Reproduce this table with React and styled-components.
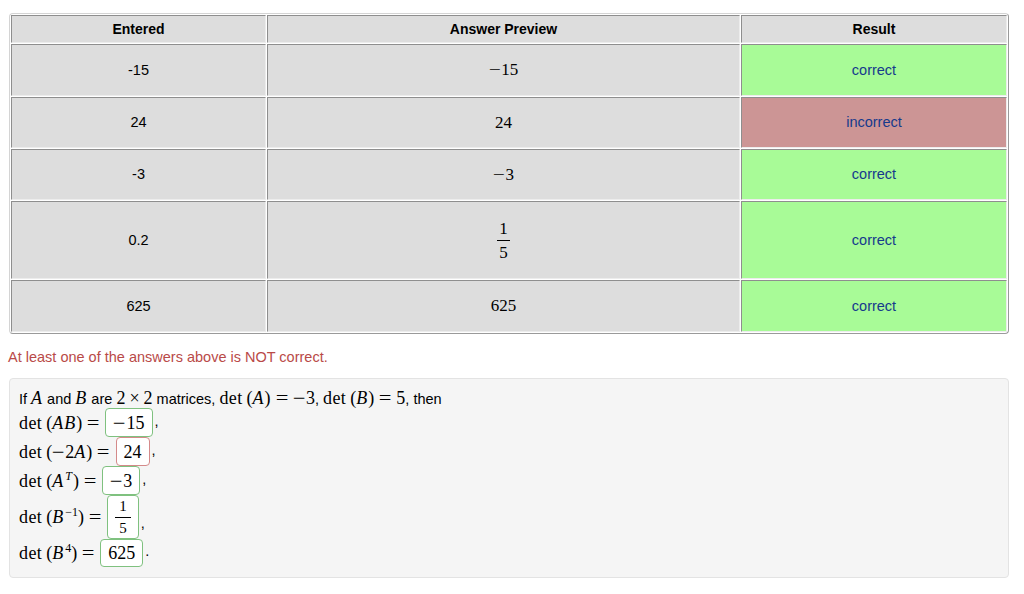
import styled, { createGlobalStyle } from "styled-components";

const GlobalStyle = createGlobalStyle`
  * { box-sizing: border-box; }
  body {
    margin: 0;
    background: #fff;
    font-family: "Liberation Sans", Arial, sans-serif;
    font-size: 14.5px;
    color: #000;
  }
`;

const rows = [
  { entered: "-15", preview: "15", neg: true, ok: true, h: 52 },
  { entered: "24", preview: "24", ok: false, h: 51 },
  { entered: "-3", preview: "3", neg: true, ok: true, h: 51 },
  { entered: "0.2", preview: { num: "1", den: "5" }, ok: true, h: 78 },
  { entered: "625", preview: "625", ok: true, h: 52 },
];

const Frac = ({ num, den, small }) => (
  <FracWrap $small={small}>
    <Num $small={small}>{num}</Num>
    <Den>{den}</Den>
  </FracWrap>
);

const App = () => {
  return (
    <Page>
      <GlobalStyle />
      <ResultsTable>
        <thead>
          <tr>
            <HeadCell $w={255}>Entered</HeadCell>
            <HeadCell $w={473}>Answer Preview</HeadCell>
            <HeadCell>Result</HeadCell>
          </tr>
        </thead>
        <tbody>
          {rows.map((r, i) => (
            <tr key={i}>
              <Cell $h={r.h}>{r.entered}</Cell>
              <Cell $h={r.h}>
                <MathText $size={17}>
                  {r.neg && <Minus>−</Minus>}
                  {typeof r.preview === "string" ? r.preview : <Frac {...r.preview} />}
                </MathText>
              </Cell>
              <Cell $h={r.h} $status={r.ok ? "ok" : "bad"}>
                <ResultText>{r.ok ? "correct" : "incorrect"}</ResultText>
              </Cell>
            </tr>
          ))}
        </tbody>
      </ResultsTable>

      <Message>At least one of the answers above is NOT correct.</Message>

      <Problem>
        <IntroLine>
          If <Var>A</Var> and <Var>B</Var> are{" "}
          <MathText>2<Bin>×</Bin>2</MathText> matrices,{" "}
          <MathText><Fn>det</Fn>(<Var>A</Var>)<Rel>=</Rel><Minus>−</Minus>3</MathText>,{" "}
          <MathText><Fn>det</Fn>(<Var>B</Var>)<Rel>=</Rel>5</MathText>, then
        </IntroLine>
        <Line>
          <MathText><Fn>det</Fn>(<Var>A</Var><Var>B</Var>)<Rel>=</Rel></MathText>
          <AnswerBox $ok><MathText><Minus>−</Minus>15</MathText></AnswerBox>
          <Punct>,</Punct>
        </Line>
        <Line>
          <MathText><Fn>det</Fn>(<Minus>−</Minus>2<Var>A</Var>)<Rel>=</Rel></MathText>
          <AnswerBox><MathText>24</MathText></AnswerBox>
          <Punct>,</Punct>
        </Line>
        <Line>
          <MathText><Fn>det</Fn>(<Var>A</Var><Sup><Var>T</Var></Sup>)<Rel>=</Rel></MathText>
          <AnswerBox $ok><MathText><Minus>−</Minus>3</MathText></AnswerBox>
          <Punct>,</Punct>
        </Line>
        <Line>
          <MathText><Fn>det</Fn>(<Var>B</Var><Sup>−1</Sup>)<Rel>=</Rel></MathText>
          <AnswerBox $ok $h={44}><MathText><Frac num="1" den="5" small /></MathText></AnswerBox>
          <Punct>,</Punct>
        </Line>
        <Line>
          <MathText><Fn>det</Fn>(<Var>B</Var><Sup>4</Sup>)<Rel>=</Rel></MathText>
          <AnswerBox $ok $h={28}><MathText>625</MathText></AnswerBox>
          <Punct>.</Punct>
        </Line>
      </Problem>
    </Page>
  );
};

export default App;

const Page = styled.div`
  padding: 13px 15px 16px 9px;
`;

const ResultsTable = styled.table`
  width: 1000px;
  table-layout: fixed;
  border-collapse: separate;
  border-spacing: 1px;
  border: 1px solid;
  border-color: #d4d4d4 #9a9a9a #9a9a9a #d4d4d4;
  border-radius: 4px;
`;

const HeadCell = styled.th`
  width: ${(p) => (p.$w ? `${p.$w}px` : "auto")};
  height: 28px;
  background: #dddddd;
  border: 1px solid;
  border-color: #8e8e8e #ececec #ececec #8e8e8e;
  padding: 0 4px;
  line-height: 17px;
  font-size: 14px;
  font-weight: bold;
  text-align: center;
`;

const Cell = styled.td`
  height: ${(p) => p.$h}px;
  background: ${(p) =>
    p.$status === "ok" ? "#a8fb97" : p.$status === "bad" ? "#cc9595" : "#dddddd"};
  border: 1px solid;
  border-color: #8e8e8e #ececec #ececec #8e8e8e;
  padding: 0 4px;
  line-height: 17px;
  font-size: 14.5px;
  text-align: center;
  vertical-align: middle;
`;

const ResultText = styled.span`
  color: #163a8c;
`;

const MathText = styled.span`
  font-family: "Liberation Serif", "Times New Roman", serif;
  font-size: ${(p) => p.$size || 18}px;
  line-height: 1;
  white-space: nowrap;
`;

const Var = styled.i`
  font-family: "Liberation Serif", "Times New Roman", serif;
  font-size: 18px;
  font-style: italic;
  padding-right: 1px;
`;

const Fn = styled.span`
  letter-spacing: 0.4px;
  margin-right: 4px;
`;

const Rel = styled.span`
  display: inline-block;
  margin: 0 6px;
  transform: scaleX(1.25);
`;

const Bin = styled.span`
  margin: 0 4px;
`;

const Minus = styled.span`
  display: inline-block;
  margin: 0 2px 0 1px;
  transform: scaleX(1.25);
`;

const Sup = styled.sup`
  font-size: 12px;
  line-height: 0;
  vertical-align: 7px;
  margin-left: 1px;

  & i {
    font-size: 12px;
  }
`;

const FracWrap = styled.span`
  display: inline-flex;
  flex-direction: column;
  align-items: center;
  vertical-align: middle;
  font-size: ${(p) => (p.$small ? "15px" : "17px")};
  line-height: ${(p) => (p.$small ? "17px" : "19px")};
`;

const Num = styled.span`
  padding: ${(p) => (p.$small ? "0 4px 2px" : "0 2px 2px")};
  border-bottom: 1px solid #000;
`;

const Den = styled.span`
  padding-top: 2px;
`;

const Message = styled.div`
  margin: 15px 0 0 -1px;
  color: #b94a48;
  font-size: 14.5px;
  line-height: 17px;
`;

const Problem = styled.div`
  width: 1000px;
  margin-top: 12px;
  padding: 10px 9px 10px 9px;
  background: #f5f5f5;
  border: 1px solid #e3e3e3;
  border-radius: 4px;
`;

const IntroLine = styled.div`
  height: 19px;
  line-height: 19px;
  font-size: 14.5px;
`;

const Line = styled.div`
  display: flex;
  align-items: center;
  line-height: 19px;
`;

const AnswerBox = styled.span`
  display: inline-flex;
  align-items: center;
  justify-content: center;
  height: ${(p) => p.$h || 29}px;
  margin-left: 1px;
  padding: 0 7px;
  background: #fff;
  border: 1px solid ${(p) => (p.$ok ? "#7fc17f" : "#d48a8a")};
  border-radius: 4px;
`;

const Punct = styled.span`
  margin-left: 2px;
  align-self: flex-end;
  padding-bottom: 6px;
  font-size: 14.5px;
`;
